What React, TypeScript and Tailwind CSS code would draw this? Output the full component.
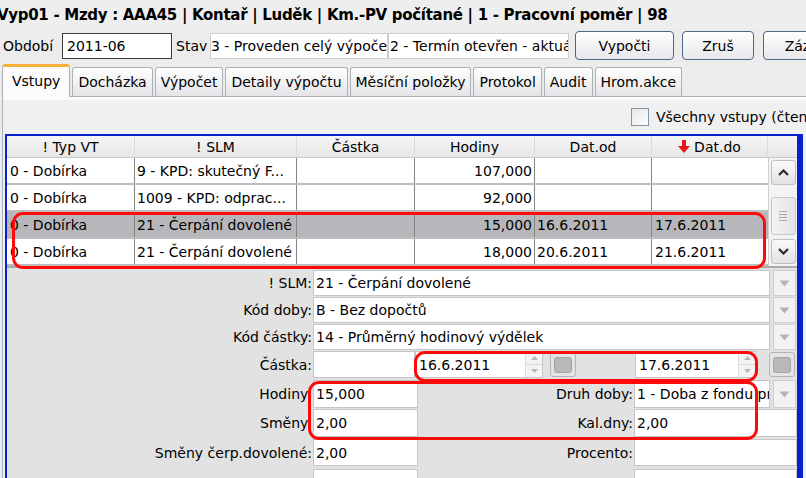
import React from 'react';

type Row = {
  typ: string;
  slm: string;
  hod: string;
  od?: string;
  dat?: string;
  sel?: boolean;
};

const rows: Row[] = [
  { typ: '0 - Dobírka', slm: '9 - KPD: skutečný F...', hod: '107,000' },
  { typ: '0 - Dobírka', slm: '1009 - KPD: odprac...', hod: '92,000' },
  { typ: '0 - Dobírka', slm: '21 - Čerpání dovolené', hod: '15,000', od: '16.6.2011', dat: '17.6.2011', sel: true },
  { typ: '0 - Dobírka', slm: '21 - Čerpání dovolené', hod: '18,000', od: '20.6.2011', dat: '21.6.2011' },
];

const tabs = ['Vstupy', 'Docházka', 'Výpočet', 'Detaily výpočtu', 'Měsíční položky', 'Protokol', 'Audit', 'Hrom.akce'];

const DropBtn = () => (
  <div className="w-[23px] h-full shrink-0 flex items-center justify-center bg-[#f2f2f2] border border-[#cfcfcf]">
    <svg width="11" height="7" viewBox="0 0 11 7">
      <path d="M0.5 0.5 H10.5 L5.5 6.5 Z" fill="#b4b4b4" />
    </svg>
  </div>
);

const Spinner = () => (
  <div className="w-[17px] h-full shrink-0 flex flex-col border-l border-[#dcdcdc]">
    <div className="flex-1 flex items-center justify-center bg-[#f4f4f4] border-b border-[#d8d8d8]">
      <svg width="7" height="4" viewBox="0 0 7 4">
        <path d="M0 4 L3.5 0 L7 4 Z" fill="#b8b8b8" />
      </svg>
    </div>
    <div className="flex-1 flex items-center justify-center bg-[#f4f4f4]">
      <svg width="7" height="4" viewBox="0 0 7 4">
        <path d="M0 0 L3.5 4 L7 0 Z" fill="#b8b8b8" />
      </svg>
    </div>
  </div>
);

const CalBtn = () => (
  <div className="w-[26px] h-[25px] shrink-0 rounded-[3px] border border-[#b4b4b4] bg-[#e4e4e4] flex items-center justify-center">
    <div className="w-[18px] h-[16px] rounded-[3px] bg-[#b9b9b9] border border-[#a3a3a3]" />
  </div>
);

const Field = ({ w, children }: { w: string; children?: React.ReactNode }) => (
  <div className={`${w} h-full shrink-0 bg-white border border-[#c6c6c6] flex items-center pl-[2px] overflow-hidden whitespace-nowrap`}>
    {children}
  </div>
);

const Label = ({ w, children }: { w: string; children?: React.ReactNode }) => (
  <div className={`${w} h-full shrink-0 flex items-center justify-end pr-[1px] whitespace-nowrap`}>{children}</div>
);

export default function App() {
  return (
    <div className="relative w-[806px] h-[478px] overflow-hidden bg-[#ececec] text-[14px] leading-none text-black font-['DejaVu_Sans',sans-serif]">
      {/* title */}
      <div className="h-[29px] flex items-center -ml-[3px] pt-[2px] whitespace-nowrap font-bold text-[15px] tracking-[-0.3px] bg-[#eeeeee]">
        Vyp01 - Mzdy : AAA45 | Kontař | Luděk | Km.-PV počítané | 1 - Pracovní poměr | 98
      </div>

      {/* period row */}
      <div className="h-[33px] flex items-center whitespace-nowrap">
        <div className="w-[62px] shrink-0 pl-[3px]">Období</div>
        <div className="w-[110px] h-[26px] shrink-0 bg-white border border-[#3a3a3a] flex items-center pl-[4px]">2011-06</div>
        <div className="w-[38px] shrink-0 pl-[4px]">Stav</div>
        <div className="w-[178px] h-[26px] shrink-0 bg-white border border-[#cfcfcf] flex items-center overflow-hidden">3 - Proveden celý výpočet</div>
        <div className="w-[181px] h-[26px] shrink-0 bg-white border border-[#cfcfcf] flex items-center overflow-hidden pl-[1px]">2 - Termín otevřen - aktuální</div>
        <div className="ml-[6px] w-[99px] h-[29px] shrink-0 rounded-[4px] border border-[#4e6488] bg-gradient-to-b from-white to-[#e8e8ec] flex items-center justify-center">
          Vypočti
        </div>
        <div className="ml-[8px] w-[72px] h-[29px] shrink-0 rounded-[4px] border border-[#4e6488] bg-gradient-to-b from-white to-[#e8e8ec] flex items-center justify-center">
          Zruš
        </div>
        <div className="ml-[9px] w-[100px] h-[29px] shrink-0 rounded-[4px] border border-[#4e6488] bg-gradient-to-b from-white to-[#e8e8ec] flex items-center justify-center">
          Záznam
        </div>
      </div>

      {/* tabs */}
      <div className="relative z-10 h-[34px] flex items-end pl-[2px] gap-[2px]">
        {tabs.map((t, i) =>
          i === 0 ? (
            <div
              key={t}
              className="h-[33px] -mb-px px-[9px] pb-[3px] shrink-0 flex items-center bg-[#fbfbfb] border border-b-0 border-[#a9b2ba] border-t-[3px] border-t-[#f5b13c] rounded-t-[3px]"
            >
              {t}
            </div>
          ) : (
            <div
              key={t}
              className="h-[29px] px-[5px] shrink-0 flex items-center bg-gradient-to-b from-white to-[#e4e4e6] border border-b-0 border-[#a9b2ba] rounded-t-[3px]"
            >
              {t}
            </div>
          )
        )}
      </div>

      {/* tab panel */}
      <div className="ml-[2px] border-l border-t border-[#a9b2ba] bg-[#f0f0f0] h-[382px]">
        <div className="h-[37px] border-t-[3px] border-[#fbfbfb] flex items-center whitespace-nowrap overflow-hidden">
          <div className="w-[628px] shrink-0" />
          <div className="w-[18px] h-[18px] border border-[#8295a6] bg-gradient-to-br from-[#e6e6e6] to-white shrink-0" />
          <div className="pl-[7px] shrink-0">Všechny vstupy (čtení)</div>
        </div>

        {/* blue frame */}
        <div className="ml-[2px] w-[798px] border-l-2 border-t-2 border-r-[6px] border-[#0a1fcf] h-[345px] overflow-hidden">
          {/* grid header */}
          <div className="h-[22px] flex bg-gradient-to-b from-[#f6f6f6] to-[#e6e6e6] border-b border-[#c8c8c8] whitespace-nowrap">
            <div className="w-[128px] flex items-center justify-center border-r border-[#dcdcdc]">! Typ VT</div>
            <div className="w-[162px] flex items-center justify-center border-r border-[#dcdcdc]">! SLM</div>
            <div className="w-[118px] flex items-center justify-center border-r border-[#dcdcdc]">Částka</div>
            <div className="w-[120px] flex items-center justify-center border-r border-[#dcdcdc]">Hodiny</div>
            <div className="w-[117px] flex items-center justify-center border-r border-[#dcdcdc]">Dat.od</div>
            <div className="w-[116px] flex items-center justify-center border-r border-[#dcdcdc] gap-[4px]">
              <svg width="12" height="13" viewBox="0 0 12 13">
                <path d="M4 0 H8 V6 H12 L6 13 L0 6 H4 Z" fill="#e8151b" />
              </svg>
              Dat.do
            </div>
            <div className="w-[29px]" />
          </div>

          {/* grid body */}
          <div className="flex h-[108px]">
            <div className="w-[761px]">
              {rows.map((r, i) => (
                <div
                  key={i}
                  className={`h-[27px] flex whitespace-nowrap border-b-2 border-[#bdbdbd] ${r.sel ? 'bg-[#b7b7bb]' : 'bg-white'}`}
                >
                  <div className="w-[128px] flex items-center pl-[3px] border-r border-[#858585]">{r.typ}</div>
                  <div className="w-[162px] flex items-center pl-[2px] border-r border-[#858585] overflow-hidden">{r.slm}</div>
                  <div className="w-[118px] border-r border-[#858585]" />
                  <div className="w-[120px] flex items-center justify-end pr-[2px] border-r border-[#858585]">{r.hod}</div>
                  <div className="w-[117px] flex items-center pl-[2px] border-r border-[#858585]">{r.od}</div>
                  <div className="w-[116px] flex items-center pl-[3px]">{r.dat}</div>
                </div>
              ))}
            </div>
            {/* scrollbar */}
            <div className="w-[29px] bg-[#f3f3f3] border-l border-[#d0d0d0] flex flex-col items-center py-[2px]">
              <div className="w-[25px] h-[26px] rounded-[3px] border border-[#b9c0c8] bg-gradient-to-b from-[#fafafa] to-[#e2e2e2] flex items-center justify-center">
                <svg width="11" height="7" viewBox="0 0 11 7">
                  <path d="M1 6 L5.5 1.5 L10 6" stroke="#2a2a2a" strokeWidth="2.2" fill="none" />
                </svg>
              </div>
              <div className="mt-[12px] w-[25px] h-[38px] rounded-[3px] border border-[#c4c9cf] bg-gradient-to-r from-[#f2f2f2] to-[#e4e4e4] flex flex-col items-center justify-center gap-[2px]">
                <div className="w-[8px] h-px bg-[#a8a8a8]" />
                <div className="w-[8px] h-px bg-[#a8a8a8]" />
                <div className="w-[8px] h-px bg-[#a8a8a8]" />
                <div className="w-[8px] h-px bg-[#a8a8a8]" />
              </div>
              <div className="mt-[4px] w-[25px] h-[26px] rounded-[3px] border border-[#b9c0c8] bg-gradient-to-b from-[#fafafa] to-[#e2e2e2] flex items-center justify-center">
                <svg width="11" height="7" viewBox="0 0 11 7">
                  <path d="M1 1 L5.5 5.5 L10 1" stroke="#2a2a2a" strokeWidth="2.2" fill="none" />
                </svg>
              </div>
            </div>
          </div>

          {/* detail form */}
          <div className="h-[215px] bg-[#e2e2e2] border-t-2 border-[#a8a8a8] pt-[2px] whitespace-nowrap">
            <div className="h-[26px] flex">
              <Label w="w-[306px]">! SLM:</Label>
              <Field w="w-[457px]">21 - Čerpání dovolené</Field>
              <div className="w-[3px] shrink-0" />
              <DropBtn />
            </div>
            <div className="mt-[1px] h-[26px] flex">
              <Label w="w-[306px]">Kód doby:</Label>
              <Field w="w-[457px]">B - Bez dopočtů</Field>
              <div className="w-[3px] shrink-0" />
              <DropBtn />
            </div>
            <div className="mt-[1px] h-[26px] flex">
              <Label w="w-[306px]">Kód částky:</Label>
              <Field w="w-[457px]">14 - Průměrný hodinový výdělek</Field>
              <div className="w-[3px] shrink-0" />
              <DropBtn />
            </div>
            <div className="mt-[1px] h-[27px] flex items-center">
              <Label w="w-[306px]">Částka:</Label>
              <Field w="w-[102px]" />
              <div className="w-[128px] h-full shrink-0 bg-white border border-[#c6c6c6] flex items-center">
                <div className="flex-1 pl-[3px]">16.6.2011</div>
                <Spinner />
              </div>
              <div className="w-[7px] shrink-0" />
              <CalBtn />
              <div className="w-[59px] shrink-0" />
              <div className="w-[121px] h-full shrink-0 bg-white border border-[#c6c6c6] flex items-center">
                <div className="flex-1 pl-[3px]">17.6.2011</div>
                <Spinner />
              </div>
              <div className="w-[13px] shrink-0" />
              <CalBtn />
            </div>
            <div className="mt-[2px] h-[28px] flex">
              <Label w="w-[306px]">Hodiny:</Label>
              <Field w="w-[105px]">15,000</Field>
              <Label w="w-[216px]">Druh doby:</Label>
              <Field w="w-[136px]">1 - Doba z fondu pr.</Field>
              <div className="w-[3px] shrink-0" />
              <DropBtn />
            </div>
            <div className="mt-[1px] h-[28px] flex">
              <Label w="w-[306px]">Směny:</Label>
              <Field w="w-[105px]">2,00</Field>
              <Label w="w-[216px]">Kal.dny:</Label>
              <Field w="w-[163px]">2,00</Field>
            </div>
            <div className="mt-[2px] h-[27px] flex">
              <Label w="w-[306px]">Směny čerp.dovolené:</Label>
              <Field w="w-[105px]">2,00</Field>
              <Label w="w-[216px]">Procento:</Label>
              <Field w="w-[163px]" />
            </div>
            <div className="mt-[3px] h-[27px] flex">
              <Label w="w-[306px]" />
              <Field w="w-[105px]" />
              <Label w="w-[216px]" />
              <Field w="w-[163px]" />
            </div>
          </div>
        </div>
      </div>

      {/* red annotation outlines */}
      <div className="absolute left-[12px] top-[212px] w-[754px] h-[57px] border-[3px] border-[#ff0a0a] rounded-[11px] pointer-events-none" />
      <div className="absolute left-[414px] top-[351px] w-[344px] h-[31px] border-[3px] border-[#ff0a0a] rounded-[11px] pointer-events-none" />
      <div className="absolute left-[308px] top-[381px] w-[450px] h-[59px] border-[3px] border-[#ff0a0a] rounded-[11px] pointer-events-none" />
    </div>
  );
}
